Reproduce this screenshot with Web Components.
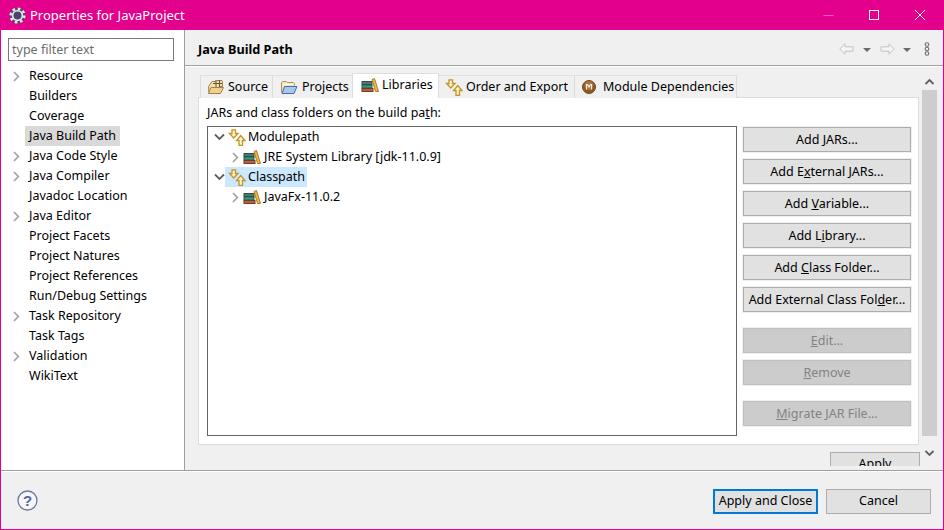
<!DOCTYPE html>
<html><head><meta charset="utf-8"><style>
html,body{margin:0;padding:0;background:#f0f0f0}
body{font:12.5px/20px "Noto Sans",sans-serif;color:#000;width:944px;height:530px;overflow:hidden}
</style></head><body>
<x-window>
  <x-titlebar slot="title">Properties for JavaProject</x-titlebar>
  <x-nav slot="nav">
    <x-filter>type filter text</x-filter>
    <x-nav-item arrow>Resource</x-nav-item>
    <x-nav-item>Builders</x-nav-item>
    <x-nav-item>Coverage</x-nav-item>
    <x-nav-item selected>Java Build Path</x-nav-item>
    <x-nav-item arrow>Java Code Style</x-nav-item>
    <x-nav-item arrow>Java Compiler</x-nav-item>
    <x-nav-item>Javadoc Location</x-nav-item>
    <x-nav-item arrow>Java Editor</x-nav-item>
    <x-nav-item>Project Facets</x-nav-item>
    <x-nav-item>Project Natures</x-nav-item>
    <x-nav-item>Project References</x-nav-item>
    <x-nav-item>Run/Debug Settings</x-nav-item>
    <x-nav-item arrow>Task Repository</x-nav-item>
    <x-nav-item>Task Tags</x-nav-item>
    <x-nav-item arrow>Validation</x-nav-item>
    <x-nav-item>WikiText</x-nav-item>
  </x-nav>
  <x-page-head slot="head">Java Build Path</x-page-head>
  <x-tabs slot="tabs">
    <x-tab icon="source" w="73" pad="6" g="3">Source</x-tab>
    <x-tab icon="folder" w="80" pad="7" g="4">Projects</x-tab>
    <x-tab icon="lib" w="87" pad="8" g="3" selected>Libraries</x-tab>
    <x-tab icon="order" w="136" pad="6" g="3">Order and Export</x-tab>
    <x-tab icon="module" w="162" pad="6" g="6">Module Dependencies</x-tab>
  </x-tabs>
  <x-panel slot="panel">
    <span slot="label">JARs and class folders on the build pa<u>t</u>h:</span>
    <x-tree slot="tree">
      <x-tree-row open icon="order">Modulepath</x-tree-row>
      <x-tree-row depth="1" icon="lib">JRE System Library [jdk-11.0.9]</x-tree-row>
      <x-tree-row open selected icon="order">Classpath</x-tree-row>
      <x-tree-row depth="1" icon="lib">JavaFx-11.0.2</x-tree-row>
    </x-tree>
    <x-btn slot="btn">Add <u>J</u>ARs...</x-btn>
    <x-btn slot="btn">Add E<u>x</u>ternal JARs...</x-btn>
    <x-btn slot="btn">Add <u>V</u>ariable...</x-btn>
    <x-btn slot="btn">Add L<u>i</u>brary...</x-btn>
    <x-btn slot="btn">Add <u>C</u>lass Folder...</x-btn>
    <x-btn slot="btn">Add External Class Fol<u>d</u>er...</x-btn>
    <x-btn slot="btn" disabled gap="16"><u>E</u>dit...</x-btn>
    <x-btn slot="btn" disabled><u>R</u>emove</x-btn>
    <x-btn slot="btn" disabled gap="16"><u>M</u>igrate JAR File...</x-btn>
  </x-panel>
  <x-btn slot="apply" w="90" ring="none">Apply</x-btn>
  <x-scrollbar slot="scroll"></x-scrollbar>
  <x-help slot="help"></x-help>
  <x-btn slot="footer" w="105" primary ring="none">Apply and Close</x-btn>
  <x-btn slot="footer" w="105" ring="none">Cancel</x-btn>
</x-window>
<script>
const ICONS={
source:`<svg width="18" height="16" viewBox="0 0 18 16"><path d="M1.5 7.5 5 2.5h4l1-1h5l.5 1v5H13l-.5 7H2z" fill="#f3dfae" stroke="#a5814a"/><path d="M1.5 14.5 4 8.5h12.5l-3 6z" fill="#efd190" stroke="#a5814a"/><path d="M9 1v7M12.5 1v7M6 4.5h9" stroke="#6b5636" fill="none"/></svg>`,
folder:`<svg width="18" height="16" viewBox="0 0 18 16"><path d="M1.5 13.5v-10l1-1h4l1 1h6l1 1v2" fill="#f4e5b5" stroke="#a99461"/><path d="M2 14.500 4.500 7.500h12.500l-3 7z" fill="#a9c6ee" stroke="#4a6ca8"/><path d="M3.500 5.500h10" stroke="#fff"/></svg>`,
lib:`<svg width="18" height="16" viewBox="0 0 18 16"><rect x="1" y="4.500" width="10" height="3" fill="#4b7a6e" stroke="#2f4f52"/><rect x="1" y="8" width="10" height="3" fill="#3b9b78" stroke="#2c5b54"/><rect x="1" y="11.500" width="11" height="3" fill="#b5623d" stroke="#6f3d29"/><path d="M11 2.500 13.500 1.500 17.500 14.500H14.500z" fill="#f2b54c" stroke="#b27b25"/></svg>`,
order:`<svg width="18" height="17" viewBox="0 0 18 17"><path d="M4 .8h3.500v3.700H10L5.750 9 1.500 4.500H4z" fill="#fff3c4" stroke="#c2942a" stroke-width="1.300"/><path d="M11 16.300v-4.800H8.500l4.250-5 4.250 5h-2.500v4.800z" fill="#fff3c4" stroke="#c2942a" stroke-width="1.300"/></svg>`,
module:`<svg width="16" height="16" viewBox="0 0 16 16"><circle cx="8" cy="8" r="6.500" fill="#8d5a26" stroke="#6e4a24"/><circle cx="8" cy="6.500" r="4.500" fill="#a9733a"/><path d="M5.500 10.500v-5h1L8 8l1.500-2.500h1v5" fill="none" stroke="#f6eee2" stroke-width="1.200"/></svg>`
};
function def(name,css,html,extra){
  customElements.define(name,class extends HTMLElement{
    constructor(){super();this.attachShadow({mode:'open'}).innerHTML=`<style>${css}</style>${html}`;}
    connectedCallback(){if(extra)extra(this,this.shadowRoot)}
  });
}
const chevR=c=>`<svg width="9" height="11" viewBox="0 0 9 11"><path d="M2 1l4.300 4.500L2 10" fill="none" stroke="${c}" stroke-width="1.800"/></svg>`;
const chevD=c=>`<svg width="11" height="9" viewBox="0 0 11 9"><path d="M1 1.500l4.500 4.500L10 1.500" fill="none" stroke="${c}" stroke-width="1.800"/></svg>`;

def('x-window',`
:host{display:flex;flex-direction:column;box-sizing:border-box;width:944px;height:530px;border:1px solid #e3008c;border-top:0;background:#f0f0f0}
.main{flex:none;height:441px;display:flex;border-bottom:1px solid #a0a0a0;box-sizing:border-box}
.nav{flex:none;width:184px;box-sizing:border-box;background:#fff;border-right:1px solid #a0a0a0}
.right{flex:1;min-width:0;display:flex;flex-direction:column;overflow:hidden}
.body{flex:1;min-height:0;display:flex;border-top:1px solid #fff;overflow:hidden}
.col{flex:none;width:722px;margin:6px 0 0 13px;display:flex;flex-direction:column;min-height:0;overflow:hidden}
.applyrow{flex:none;display:flex;justify-content:flex-end;margin-top:7px;height:14px;overflow:hidden}
.sb{flex:none;margin-left:2px;width:15px}
.foot{flex:1;display:flex;align-items:center;justify-content:space-between;padding:0 12px 0 16px;border-top:1px solid #fff}
.fbtns{display:flex;gap:8px;padding-top:1px}
`,`<slot name="title"></slot>
<div class="main"><div class="nav"><slot name="nav"></slot></div>
<div class="right"><slot name="head"></slot>
<div class="body"><div class="col"><slot name="tabs"></slot><slot name="panel"></slot><div class="applyrow"><slot name="apply"></slot></div></div><div class="sb"><slot name="scroll"></slot></div></div>
</div></div>
<div class="foot"><slot name="help"></slot><div class="fbtns"><slot name="footer"></slot></div></div>`);

def('x-titlebar',`
:host{display:flex;flex:none;align-items:center;height:30px;margin:0 -1px;background:#e3008c;color:#fff;padding-left:9px;font-size:13px}
.g{width:17px;height:17px;margin-right:4px;flex:none}
.t{flex:1}
.c{flex:none;width:46px;height:30px;display:flex;align-items:center;justify-content:center}
.cs{margin-right:1px;display:flex}
`,`<svg class="g" viewBox="0 0 17 17"><circle cx="8.5" cy="8.5" r="8" fill="#5a4468"/><circle cx="8.5" cy="8.5" r="6.800" fill="none" stroke="#e6e6ea" stroke-width="2.600" stroke-dasharray="2.670 2.670"/><circle cx="8.5" cy="8.5" r="5.600" fill="#ececf0"/><circle cx="8.5" cy="8.5" r="4" fill="#4b4470"/></svg>
<span class="t"><slot></slot></span>
<span class="cs"><span class="c"><svg width="11" height="11"><path d="M.5 5.500h10" stroke="#f35fb5"/></svg></span>
<span class="c"><svg width="11" height="11"><rect x=".5" y=".5" width="9" height="9" fill="none" stroke="#fff"/></svg></span>
<span class="c"><svg width="12" height="12"><path d="M1 1l10 10M11 1 1 11" stroke="#fff" fill="none"/></svg></span></span>`);

def('x-nav',`:host{display:block;padding:8px 10px 0 7px}.list{margin-top:5px}`,`<slot name="f"></slot><div class="list"><slot></slot></div>`,(el)=>{const f=el.querySelector('x-filter');if(f)f.slot='f';});
def('x-filter',`:host{display:block;box-sizing:border-box;height:23px;border:1px solid #7a7a7a;padding:0 3px;line-height:21px;color:#6d6d6d;background:#fff}`,`<slot></slot>`);
def('x-nav-item',`
:host{display:flex;height:20px;line-height:19px;align-items:center}
.a{flex:none;width:18px;display:flex;justify-content:center;height:20px;align-items:center;margin-left:-1px}
.t{padding:0 4px;height:20px}
:host([selected]) .t{background:#d9d9d9}
`,`<span class="a"></span><span class="t"><slot></slot></span>`,(el,s)=>{if(el.hasAttribute('arrow'))s.querySelector('.a').innerHTML=chevR('#a6a6a6');});

def('x-page-head',`:host{display:flex;flex:none;align-items:center;box-sizing:border-box;height:36px;padding:3px 13px 0 13px;border-bottom:1px solid #a0a0a0;font-weight:700;font-size:12.7px}
.t{flex:1}.i{display:flex;align-items:center}.d{width:0;height:0;border:4px solid transparent;border-top:4px solid #6a6a6a;border-bottom:0;margin:1px 0 0 9px}
`,`<span class="t"><slot></slot></span><span class="i">
<svg width="15" height="12" viewBox="0 0 15 12"><path d="M.8 6 6 .8v3h8v4.400H6v3z" fill="#f4f4f4" stroke="#c3c3c3"/></svg><i class="d"></i>
<svg width="15" height="12" viewBox="0 0 15 12" style="margin-left:9px"><path d="M14.200 6 9 .8v3H1v4.400h8v3z" fill="#f4f4f4" stroke="#c3c3c3"/></svg><i class="d" style="margin-left:8px"></i>
<svg width="6" height="14" viewBox="0 0 6 14" style="margin-left:13px"><g fill="none" stroke="#6e6e6e" stroke-width="1.100"><circle cx="3" cy="2.500" r="1.800"/><circle cx="3" cy="7" r="1.800"/><circle cx="3" cy="11.500" r="1.800"/></g></svg></span>`);

def('x-tabs',`:host{display:flex;flex:none;height:25px;padding-left:2px;align-items:flex-end;margin-bottom:-1px;position:relative;z-index:1}`,`<slot></slot>`);
def('x-tab',`
:host{display:flex;box-sizing:border-box;height:23px;align-items:center;border:1px solid #dcdcdc;border-left:0;border-bottom:0;background:#f0f0f0;color:#000;white-space:nowrap;border-top-color:#e0e0e0}
:host(:first-child){border-left:1px solid #dcdcdc}
:host([selected]){height:25px;background:#fff;padding-bottom:2px;margin-left:-1px;border-left:1px solid #dcdcdc}
span{display:flex;flex:none}
`,`<span class="i"></span><slot></slot>`,(el,s)=>{s.querySelector('.i').innerHTML=ICONS[el.getAttribute('icon')];el.style.width=el.getAttribute('w')+'px';el.style.paddingLeft=el.getAttribute('pad')+'px';el.style.gap=el.getAttribute('g')+'px';});

def('x-panel',`
:host{display:flex;flex-direction:column;box-sizing:border-box;flex:none;width:721px;height:348px;background:#fff;border:1px solid #dcdcdc;padding:5px 7px 0 8px}
.lab{height:20px;line-height:20px}
.row{display:flex;margin-top:3px;gap:5px}
.tree{flex:none;width:530px;height:310px}
.btns{flex:none;width:170px;display:flex;flex-direction:column;padding-top:1px}
`,`<div class="lab"><slot name="label"></slot></div><div class="row"><div class="tree"><slot name="tree"></slot></div><div class="btns"><slot name="btn"></slot></div></div>`);

def('x-tree',`:host{display:block;box-sizing:border-box;width:530px;height:310px;border:1px solid #646464;background:#fff}`,`<slot></slot>`);
def('x-tree-row',`
:host{display:flex;align-items:center;height:20px;padding-left:6px}
.a{flex:none;width:11px;height:20px;display:flex;align-items:center;justify-content:center}
.i{flex:none;display:flex;width:18px;margin:0 2px 0 3px;justify-content:center}
.t{height:20px;line-height:19px;padding-right:2px}
.w{display:flex;align-items:center;height:20px}
:host([selected]) .w{background:#cce8ff}
:host([depth]){padding-left:22px}
:host([depth]) .i{margin:0 3px 0 2px}
`,`<span class="a"></span><span class="w"><span class="i"></span><span class="t"><slot></slot></span></span>`,(el,s)=>{
 s.querySelector('.a').innerHTML=el.hasAttribute('open')?chevD('#5f5f5f'):chevR('#a6a6a6');
 s.querySelector('.i').innerHTML=ICONS[el.getAttribute('icon')];
});

def('x-btn',`
:host{display:flex;box-sizing:border-box;align-items:center;justify-content:center;flex:none;height:25px;border:1px solid #adadad;background:#e1e1e1;white-space:nowrap;outline:1px solid #f0f0f0;color:#000}
:host([disabled]){background:#cccccc;border-color:#bfbfbf;color:#838383}
:host([primary]){border:2px solid #0078d7}
:host([ring=none]){outline:0;padding-bottom:1px}
span{white-space:pre}
`,`<span><slot></slot></span>`,(el)=>{
 const w=el.getAttribute('w');
 if(w)el.style.width=w+'px';else{el.style.width='168px';el.style.marginBottom='7px';el.style.marginLeft='1px';}
 const g=el.getAttribute('gap');if(g)el.style.marginTop=(+g-7)+'px';
});

def('x-scrollbar',`
:host{display:flex;flex-direction:column;align-items:center;width:15px;height:397px;margin-top:6px;background:#f0f0f0}
.b{flex:none;height:17px;display:flex;align-items:center;justify-content:center}
.th{flex:none;width:15px;height:346px;background:#cdcdcd}
.sp{flex:1}
`,`<div class="b"><svg width="11" height="9" viewBox="0 0 11 9"><path d="M1.500 7 5.500 3l4 4" fill="none" stroke="#606060" stroke-width="1.800"/></svg></div><div class="th"></div><div class="sp"></div><div class="b" style="height:34px"><svg width="11" height="9" viewBox="0 0 11 9"><path d="M1.500 2l4 4 4-4" fill="none" stroke="#606060" stroke-width="1.800"/></svg></div>`);

def('x-help',`:host{display:flex;width:21px;height:21px;margin-bottom:1px}`,`<svg width="21" height="21" viewBox="0 0 21 21"><circle cx="10.500" cy="10.500" r="9.500" fill="#f6f6fa" stroke="#6b7a9c" stroke-width="1.300"/><text x="10.500" y="16" text-anchor="middle" font-family="Liberation Sans" font-weight="700" font-size="15" fill="#55688e">?</text></svg>`);
</script>
</body></html>
